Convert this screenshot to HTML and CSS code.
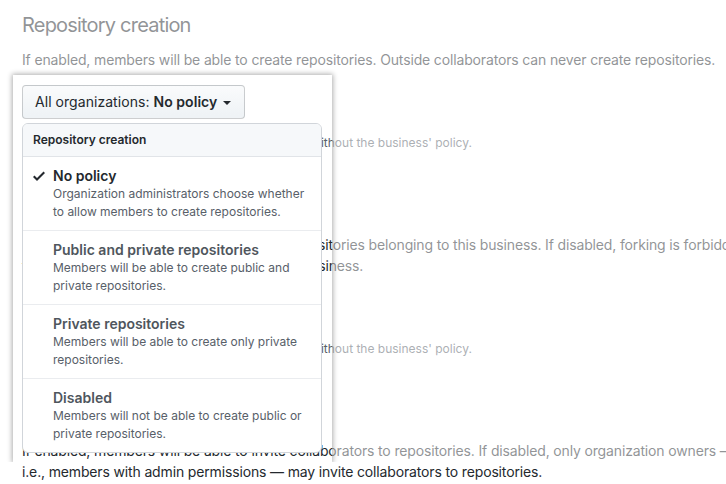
FILE: index.html
```html
<!DOCTYPE html>
<html lang="en">
<head>
<meta charset="utf-8">
<title>Member privileges</title>
<link rel="stylesheet" href="styles.css">
</head>
<body>
<div class="page">
  <section class="setting">
    <h2 class="setting-title">Repository creation</h2>
    <p class="setting-desc">If enabled, members will be able to create repositories. Outside collaborators can never create repositories.</p>
    <button class="btn" type="button">All organizations: <b>No policy</b><span class="caret"></span></button>
    <p class="setting-note"><a class="note-link" href="#">View your organizations' current configurations</a> without the business' policy.</p>
  </section>
  <section class="setting">
    <h2 class="setting-title">Repository forking</h2>
    <p class="setting-desc"><span class="desc-lead">If enabled, forking is allowed for private repo</span>sitories belonging to this business. If disabled, forking is forbidden<br>for all private repositories belonging to this business.</p>
    <button class="btn" type="button">All organizations: <b>No policy</b><span class="caret"></span></button>
    <p class="setting-note"><a class="note-link" href="#">View your organizations' current configurations</a> without the business' policy.</p>
  </section>
  <section class="setting">
    <h2 class="setting-title">Repository invitations</h2>
    <p class="setting-desc">If enabled, members will be able to invite collaborators to repositories. If disabled, only organization owners —<br>i.e., members with admin permissions — may invite collaborators to repositories.</p>
  </section>

  <div class="fade-clip"><div class="spotlight"></div></div>

  <div class="menu">
    <div class="menu-header">Repository creation</div>
    <div class="menu-item selected">
      <span class="check"><svg width="12" height="16" viewBox="0 0 12 16"><path fill="#24292e" d="M12 5l-8 8-4-4 1.5-1.5L4 10l6.5-6.5L12 5z"/></svg></span>
      <div class="item-body">
        <div class="item-title">No policy</div>
        <div class="item-desc">Organization administrators choose whether<br>to allow members to create repositories.</div>
      </div>
    </div>
    <div class="menu-item">
      <span class="check"></span>
      <div class="item-body">
        <div class="item-title">Public and private repositories</div>
        <div class="item-desc">Members will be able to create public and<br>private repositories.</div>
      </div>
    </div>
    <div class="menu-item">
      <span class="check"></span>
      <div class="item-body">
        <div class="item-title">Private repositories</div>
        <div class="item-desc">Members will be able to create only private<br>repositories.</div>
      </div>
    </div>
    <div class="menu-item">
      <span class="check"></span>
      <div class="item-body">
        <div class="item-title">Disabled</div>
        <div class="item-desc">Members will not be able to create public or<br>private repositories.</div>
      </div>
    </div>
  </div>
</div>
</body>
</html>
```
FILE: styles.css
```css
html, body {
  margin: 0;
  background: #fff;
}

.page {
  position: relative;
  height: 484px;
  overflow: hidden;
  box-sizing: border-box;
  padding: 10px 0 0 22px;
  font-family: Inter, "Noto Sans", sans-serif;
  color: #24292e;
  white-space: nowrap;
}

.setting + .setting {
  margin-top: 43px;
}

.setting-title {
  margin: 0;
  font-size: 20px;
  font-weight: 400;
  line-height: 30px;
  letter-spacing: -0.8px;
}

.setting-desc {
  margin: 9px 0 0;
  font-size: 14px;
  line-height: 21px;
  letter-spacing: -0.15px;
}

.desc-lead {
  letter-spacing: 0px;
}

.btn {
  display: block;
  box-sizing: border-box;
  height: 34px;
  margin-top: 15px;
  padding: 6px 12px;
  border: 1px solid rgba(27, 31, 35, 0.2);
  border-radius: 4px;
  background: linear-gradient(#fafbfc, #eff3f6 90%);
  font: inherit;
  font-size: 14px;
  line-height: 20px;
  letter-spacing: 0.05px;
  color: #24292e;
}

.btn b {
  font-weight: 600;
}

.caret {
  display: inline-block;
  width: 0;
  height: 0;
  margin-left: 6px;
  margin-right: 1px;
  vertical-align: middle;
  border-style: solid;
  border-width: 4px 4px 0;
  border-color: currentColor transparent transparent;
}

.setting-note {
  margin: 15px 0 0;
  font-size: 12px;
  line-height: 18px;
  color: #586069;
}

.note-link {
  color: #0366d6;
  text-decoration: none;
  letter-spacing: 0.35px;
}

.fade-clip {
  position: absolute;
  left: 0;
  top: 0;
  width: 100%;
  height: 462px;
  overflow: hidden;
  pointer-events: none;
}

.spotlight {
  position: absolute;
  left: 13px;
  top: 75px;
  width: 319px;
  height: 387px;
  box-shadow: 0 0 5px 1px rgba(0, 0, 0, 0.32), 0 0 0 1200px rgba(255, 255, 255, 0.5);
}

.menu {
  position: absolute;
  left: 22px;
  top: 123px;
  width: 300px;
  box-sizing: border-box;
  border: 1px solid #d1d5da;
  border-radius: 6px;
  background: #fff;
  overflow: hidden;
}

.menu-header {
  padding: 8px 10px;
  font-size: 12px;
  font-weight: 600;
  line-height: 16px;
  background: #f6f8fa;
  border-bottom: 1px solid #e1e4e8;
}

.menu-item {
  display: flex;
  padding: 10px 10px 9px;
  border-bottom: 1px solid #eaecef;
}

.menu-item:last-child {
  border-bottom: 0;
}

.check {
  flex: none;
  width: 16px;
  margin-right: 4px;
}

.check svg {
  display: block;
  margin-top: 1px;
}

.item-title {
  font-size: 14px;
  font-weight: 600;
  line-height: 18px;
  color: #4f565d;
}

.selected .item-title {
  color: #24292e;
}

.item-desc {
  font-size: 12px;
  line-height: 18px;
  color: #586069;
}
```
